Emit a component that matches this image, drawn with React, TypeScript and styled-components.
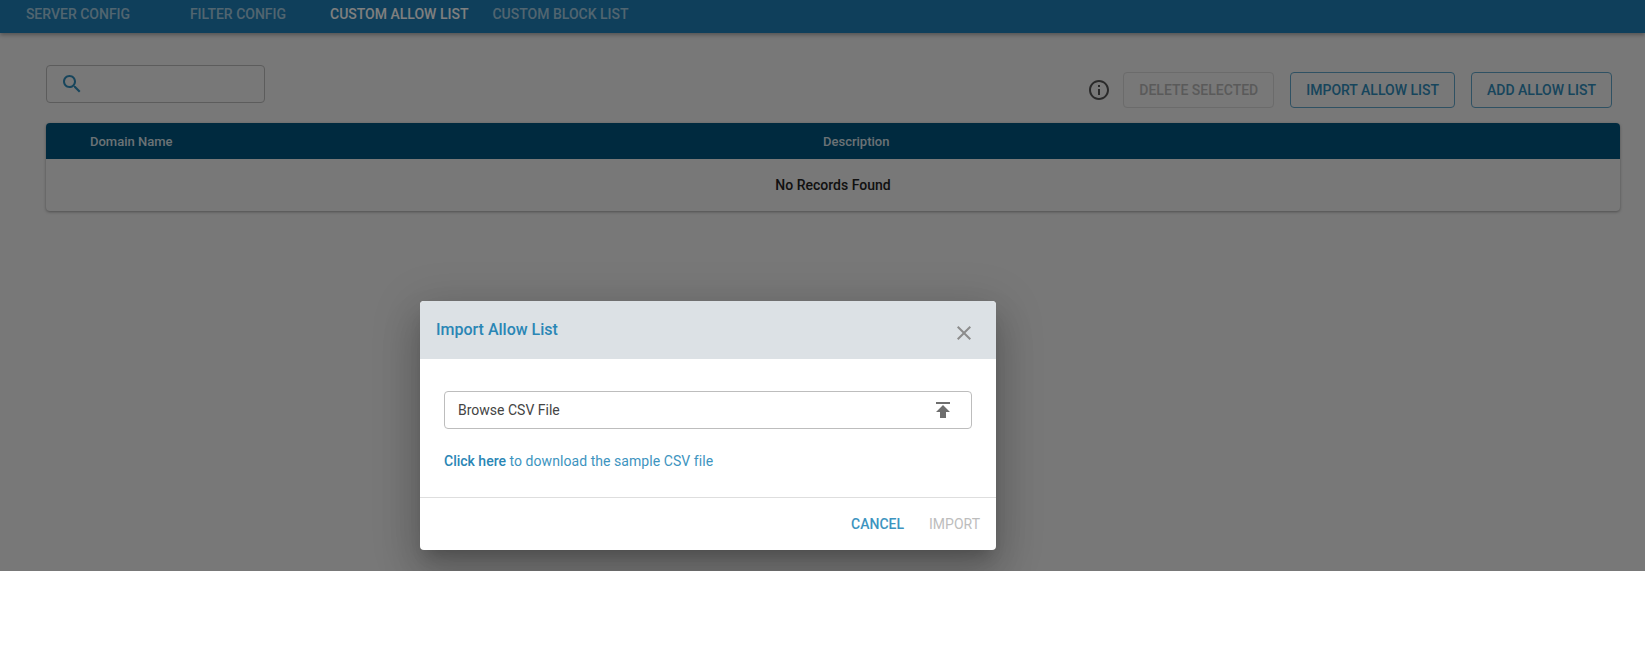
import * as React from 'react';
import styled, { createGlobalStyle } from 'styled-components';

const GlobalStyle = createGlobalStyle`
  html, body {
    margin: 0;
    padding: 0;
    background: #fff;
    font-family: Roboto, "Liberation Sans", sans-serif;
  }
`;

const Page = styled.div`
  position: relative;
  height: 571px;
  overflow: hidden;
  background: #f0f0f0;
`;

const TopBar = styled.div`
  display: flex;
  height: 33px;
  box-sizing: border-box;
  background: #1e7eb6;
  box-shadow: 0 2px 4px rgba(0, 0, 0, 0.3);
`;

const TabList = styled.div`
  display: flex;
  margin-left: -2px;
`;

const Tab = styled.div<{ $active?: boolean }>`
  min-width: 160px;
  height: 28px;
  box-sizing: border-box;
  padding: 0 12px;
  display: flex;
  align-items: center;
  justify-content: center;
  font-size: 14px;
  font-weight: 500;
  color: ${p => (p.$active ? '#fff' : 'rgba(255, 255, 255, 0.6)')};
`;

const Content = styled.div`
  padding: 32px 25px 0 46px;
`;

const Toolbar = styled.div`
  display: flex;
  justify-content: space-between;
  align-items: flex-start;
`;

const SearchBox = styled.div`
  width: 219px;
  height: 38px;
  box-sizing: border-box;
  display: flex;
  align-items: center;
  padding-left: 13px;
  border: 1px solid #b8b8b8;
  border-radius: 4px;
  color: #2f8ab8;
`;

const Actions = styled.div`
  display: flex;
  align-items: center;
  gap: 16px;
  margin: 7px 8px 0 0;
`;

const InfoIcon = styled.svg`
  display: block;
  width: 24px;
  height: 24px;
  margin-right: -4px;
  fill: #555;
`;

const OutlineButton = styled.button<{ $disabled?: boolean }>`
  height: 36px;
  box-sizing: border-box;
  padding: 0 15px;
  background: transparent;
  border: 1px solid ${p => (p.$disabled ? '#d6d6d6' : '#5fa3c7')};
  border-radius: 4px;
  font-family: inherit;
  font-size: 14px;
  font-weight: 500;
  color: ${p => (p.$disabled ? '#b5b5b5' : '#2f8ab8')};
`;

const Table = styled.div`
  margin-top: 15px;
  border-radius: 4px;
  overflow: hidden;
  box-shadow: 0 1px 3px rgba(0, 0, 0, 0.35);
`;

const TableHead = styled.div`
  display: grid;
  grid-template-columns: 733px 1fr;
  align-items: center;
  height: 36px;
  padding-left: 44px;
  background: #00557f;
  font-size: 13px;
  font-weight: 500;
  color: rgba(255, 255, 255, 0.85);
`;

const EmptyRow = styled.div`
  height: 52px;
  display: flex;
  align-items: center;
  justify-content: center;
  font-size: 14px;
  font-weight: 500;
  color: #222;
`;

const Scrim = styled.div`
  position: absolute;
  inset: 0;
  background: rgba(0, 0, 0, 0.5);
`;

const Dialog = styled.div`
  position: absolute;
  left: 420px;
  top: 301px;
  width: 576px;
  height: 249px;
  display: flex;
  flex-direction: column;
  background: #fff;
  border-radius: 4px;
  overflow: hidden;
  box-shadow: 0 11px 15px -7px rgba(0, 0, 0, 0.2), 0 24px 38px 3px rgba(0, 0, 0, 0.14), 0 9px 46px 8px rgba(0, 0, 0, 0.12);
`;

const DialogHeader = styled.div`
  height: 58px;
  flex: none;
  box-sizing: border-box;
  display: flex;
  justify-content: space-between;
  padding: 18px 20px 0 16px;
  background: #dce1e5;
`;

const DialogTitle = styled.div`
  font-size: 16px;
  font-weight: 500;
  line-height: 22px;
  color: #2a86b5;
`;

const CloseIcon = styled.svg`
  display: block;
  width: 24px;
  height: 24px;
  margin-top: 2px;
  fill: #8c8c8c;
`;

const DialogBody = styled.div`
  flex: 1;
  padding: 32px 24px 0;
  border-bottom: 1px solid #dedede;
`;

const FileField = styled.div`
  height: 38px;
  box-sizing: border-box;
  display: flex;
  align-items: center;
  justify-content: space-between;
  padding: 0 16px 0 13px;
  border: 1px solid #bdbdbd;
  border-radius: 4px;
  font-size: 14px;
  color: #444;
`;

const UploadIcon = styled.svg`
  display: block;
  width: 24px;
  height: 24px;
  fill: #6e6e6e;
`;

const SampleText = styled.div`
  margin-top: 22px;
  font-size: 14px;
  line-height: 20px;
  letter-spacing: 0.06px;
  color: #3d94c0;
`;

const SampleLink = styled.span`
  font-weight: 500;
  letter-spacing: 0;
  color: #2a86b5;
`;

const DialogFooter = styled.div`
  height: 52px;
  flex: none;
  display: flex;
  align-items: center;
  justify-content: flex-end;
  gap: 25px;
  padding-right: 16px;
`;

const TextButton = styled.span<{ $disabled?: boolean }>`
  font-size: 14px;
  font-weight: ${p => (p.$disabled ? 400 : 500)};
  color: ${p => (p.$disabled ? '#bdbdbd' : '#3d94c0')};
`;

export default function App() {
  return (
    <>
      <GlobalStyle />
      <Page>
        <TopBar>
          <TabList>
            <Tab>SERVER CONFIG</Tab>
            <Tab>FILTER CONFIG</Tab>
            <Tab $active>CUSTOM ALLOW LIST</Tab>
            <Tab>CUSTOM BLOCK LIST</Tab>
          </TabList>
        </TopBar>
        <Content>
          <Toolbar>
            <SearchBox>
              <svg width="24" height="24" viewBox="0 0 24 24" fill="currentColor">
                <path d="M15.5 14h-.79l-.28-.27C15.41 12.59 16 11.11 16 9.5 16 5.91 13.09 3 9.5 3S3 5.91 3 9.5 5.91 16 9.5 16c1.61 0 3.09-.59 4.23-1.57l.27.28v.79l5 4.99L20.49 19l-4.99-5zm-6 0C7.01 14 5 11.99 5 9.5S7.01 5 9.5 5 14 7.01 14 9.5 11.99 14 9.5 14z" />
              </svg>
            </SearchBox>
            <Actions>
              <InfoIcon viewBox="0 0 24 24">
                <path d="M11 7h2v2h-2zm0 4h2v6h-2zm1-9C6.48 2 2 6.48 2 12s4.48 10 10 10 10-4.48 10-10S17.52 2 12 2zm0 18c-4.41 0-8-3.59-8-8s3.59-8 8-8 8 3.59 8 8-3.59 8-8 8z" />
              </InfoIcon>
              <OutlineButton $disabled>DELETE SELECTED</OutlineButton>
              <OutlineButton>IMPORT ALLOW LIST</OutlineButton>
              <OutlineButton>ADD ALLOW LIST</OutlineButton>
            </Actions>
          </Toolbar>
          <Table>
            <TableHead>
              <span>Domain Name</span>
              <span>Description</span>
            </TableHead>
            <EmptyRow>No Records Found</EmptyRow>
          </Table>
        </Content>
        <Scrim />
        <Dialog>
          <DialogHeader>
            <DialogTitle>Import Allow List</DialogTitle>
            <CloseIcon viewBox="0 0 24 24">
              <path d="M19 6.41L17.59 5 12 10.59 6.41 5 5 6.41 10.59 12 5 17.59 6.41 19 12 13.41 17.59 19 19 17.59 13.41 12z" />
            </CloseIcon>
          </DialogHeader>
          <DialogBody>
            <FileField>
              Browse CSV File
              <UploadIcon viewBox="0 0 24 24">
                <path d="M5 4v2h14V4H5zm0 10h4v6h6v-6h4l-7-7-7 7z" />
              </UploadIcon>
            </FileField>
            <SampleText>
              <SampleLink>Click here</SampleLink> to download the sample CSV file
            </SampleText>
          </DialogBody>
          <DialogFooter>
            <TextButton>CANCEL</TextButton>
            <TextButton $disabled>IMPORT</TextButton>
          </DialogFooter>
        </Dialog>
      </Page>
    </>
  );
}
